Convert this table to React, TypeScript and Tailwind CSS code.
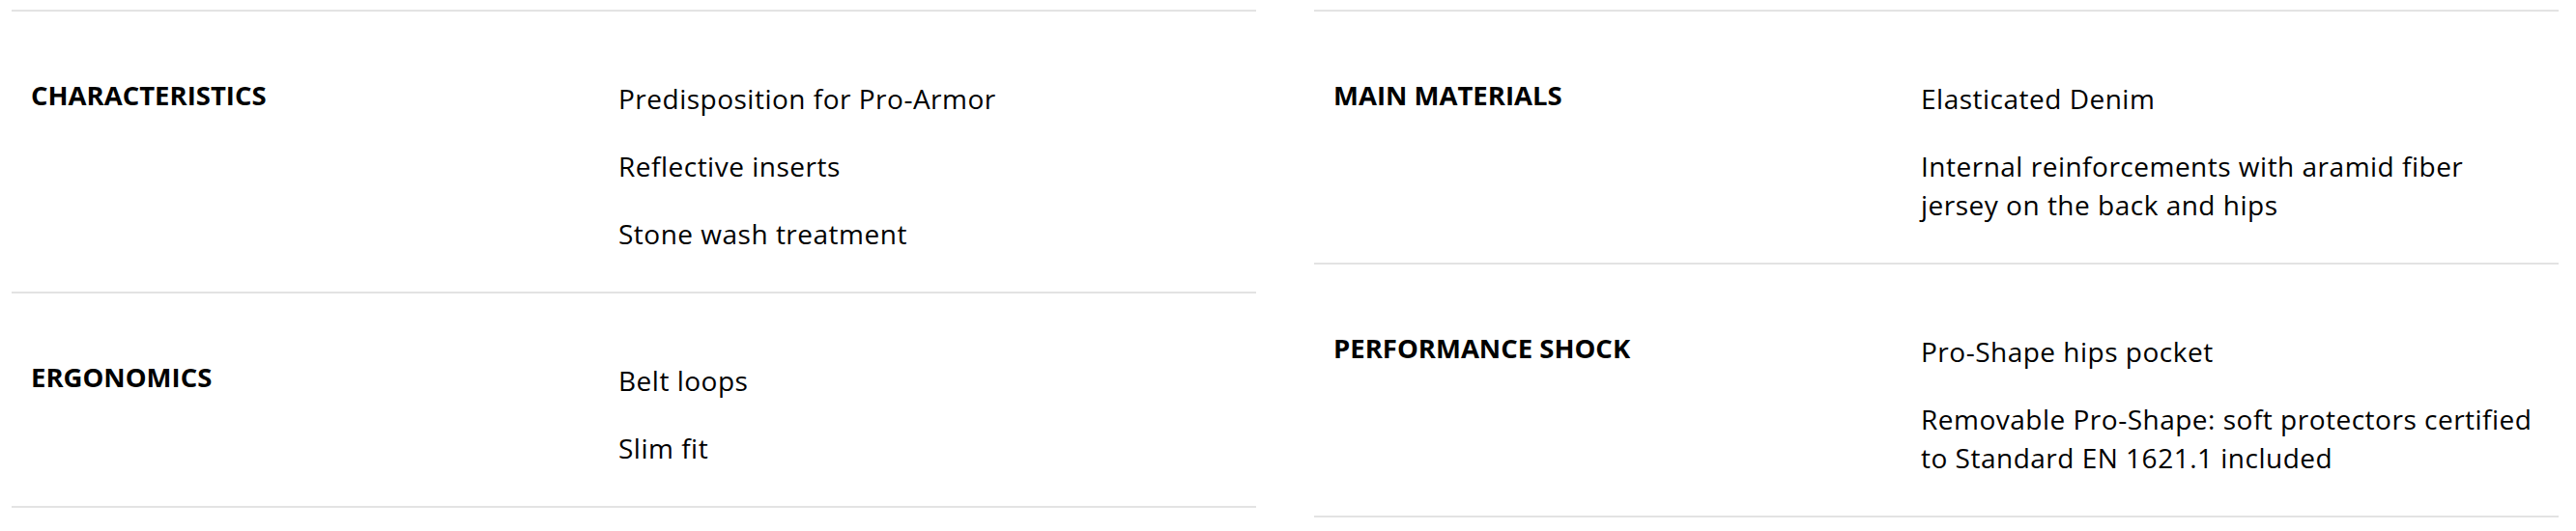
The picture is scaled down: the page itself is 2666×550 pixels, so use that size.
import React from "react";

type Row = { title: string; items: string[] };

const left: Row[] = [
  {
    title: "CHARACTERISTICS",
    items: ["Predisposition for Pro-Armor", "Reflective inserts", "Stone wash treatment"],
  },
  { title: "ERGONOMICS", items: ["Belt loops", "Slim fit"] },
];

const right: Row[] = [
  {
    title: "MAIN MATERIALS",
    items: ["Elasticated Denim", "Internal reinforcements with aramid fiber jersey on the back and hips"],
  },
  {
    title: "PERFORMANCE SHOCK",
    items: [
      "Pro-Shape hips pocket",
      "Removable Pro-Shape: soft protectors certified to Standard EN 1621.1 included",
    ],
  },
];

function Panel({ rows }: { rows: Row[] }) {
  return (
    <div className="w-[1288px] border-t-2 border-[#e3e3e3]">
      {rows.map((r) => (
        <div key={r.title} className="flex border-b-2 border-[#e3e3e3] pt-[70px] pb-[10px]">
          <div className="w-[608px] shrink-0 pl-[20px]">
            <h3 className="text-[27.5px] leading-[34px] font-bold text-black">{r.title}</h3>
          </div>
          <ul className="w-[659px] shrink-0 pl-[20px]">
            {r.items.map((it) => (
              <li key={it} className="mb-[30px] text-[28px] leading-[40px] tracking-[0.5px] text-black">
                {it}
              </li>
            ))}
          </ul>
        </div>
      ))}
    </div>
  );
}

export default function App() {
  return (
    <div
      className="min-h-[550px] w-[2666px] bg-white pt-[10px] pl-[12px]"
      style={{ fontFamily: '"Open Sans", "Noto Sans", sans-serif' }}
    >
      <div className="flex items-start gap-[60px]">
        <Panel rows={left} />
        <Panel rows={right} />
      </div>
    </div>
  );
}
